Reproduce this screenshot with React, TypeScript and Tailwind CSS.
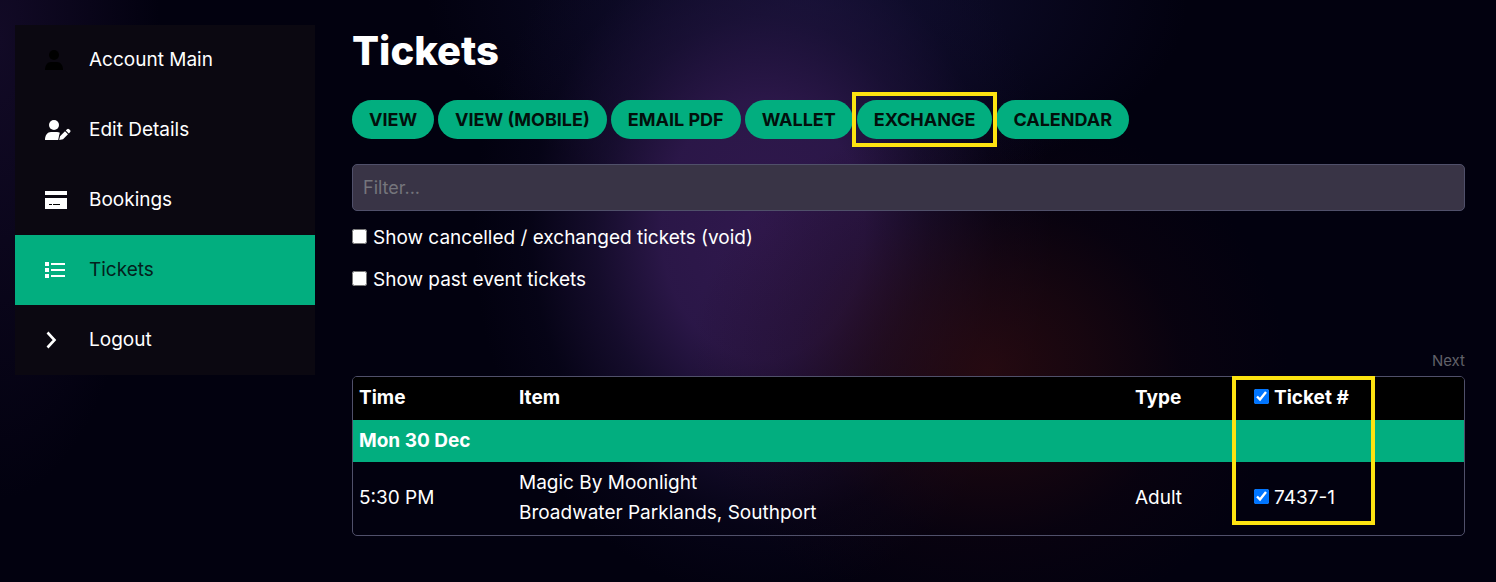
import type { ReactNode } from "react";

type NavItem = { label: string; icon: ReactNode; active?: boolean };

const navItems: NavItem[] = [
  {
    label: "Account Main",
    icon: (
      <svg viewBox="0 0 26 22" className="h-[22px] w-[26px] fill-black">
        <circle cx="9" cy="6" r="5" />
        <path d="M0 21c0-5 2.500-8 6-8h6c3.500 0 6 3 6 8z" />
      </svg>
    ),
  },
  {
    label: "Edit Details",
    icon: (
      <svg viewBox="0 0 26 22" className="h-[22px] w-[26px] fill-white">
        <circle cx="9" cy="6" r="5" />
        <path d="M0 21c0-5 2.500-8 6-8h6c1 0 2 .3 2.800.8L14 17l-.8 4z" />
        <path d="M14.200 21l.8-3.800 5-5 3 3-5 5zM20.800 11.400l1.200-1.200a1.500 1.500 0 0 1 2.100 0l.9.900a1.500 1.500 0 0 1 0 2.100l-1.200 1.200z" />
      </svg>
    ),
  },
  {
    label: "Bookings",
    icon: (
      <svg viewBox="0 0 26 22" className="h-[22px] w-[26px] fill-white">
        <path d="M0 2h22v4H0zM0 9h22v11H0z" />
        <path d="M4 15.500h3M8 15.500h7" className="stroke-black" />
      </svg>
    ),
  },
  {
    label: "Tickets",
    active: true,
    icon: (
      <svg viewBox="0 0 26 22" className="h-[22px] w-[26px] fill-white">
        <path d="M0 3h4v4H0zM0 9h4v4H0zM0 15h4v4H0zM6 4h14v2H6zM6 10h14v2H6zM6 16h14v2H6z" />
      </svg>
    ),
  },
  {
    label: "Logout",
    icon: (
      <svg viewBox="0 0 26 22" className="h-[22px] w-[26px]">
        <path d="M2.500 3.500L9.500 11l-7 7.500" fill="none" stroke="white" strokeWidth="2.600" />
      </svg>
    ),
  },
];

const actions = ["View", "View (Mobile)", "Email PDF", "Wallet", "Exchange", "Calendar"];

function Sidebar() {
  return (
    <nav className="w-[300px] shrink-0 self-start bg-[#0b0811]">
      {navItems.map((item) => (
        <a
          key={item.label}
          href="#"
          className={`flex h-[70px] items-center gap-[18px] pl-[30px] ${item.active ? "bg-[#02ae7f] text-[#04211c]" : "text-white"}`}
        >
          {item.icon}
          {item.label}
        </a>
      ))}
    </nav>
  );
}

function ActionBar() {
  return (
    <div className="mt-6 flex flex-wrap gap-1">
      {actions.map((action) => (
        <div key={action} className="relative">
          <button
            type="button"
            className="h-[39px] rounded-full bg-[#02ae7f] px-[17px] text-[18px] font-bold text-[#02100c] uppercase"
          >
            {action}
          </button>
          {action === "Exchange" && (
            <div className="pointer-events-none absolute -inset-x-[5px] -inset-y-2 z-10 border-4 border-[#fde311]" />
          )}
        </div>
      ))}
    </div>
  );
}

function TicketsTable() {
  return (
    <div className="relative">
      <div className="overflow-hidden rounded-[5px] border border-[#50506a]">
        <table className="w-full table-fixed text-left">
          <colgroup>
            <col className="w-[160px]" />
            <col />
            <col className="w-[119px]" />
            <col className="w-[216px]" />
          </colgroup>
          <thead>
            <tr className="bg-black">
              <th className="px-1.5 pt-1.5 pb-[7px] font-bold">Time</th>
              <th className="px-1.5 pt-1.5 pb-[7px] font-bold">Item</th>
              <th className="px-1.5 pt-1.5 pb-[7px] font-bold">Type</th>
              <th className="px-1.5 pt-1.5 pb-[7px] font-bold">
                <label className="flex items-center gap-[5px]">
                  <input type="checkbox" defaultChecked className="mb-1 size-[15px]" />
                  Ticket #
                </label>
              </th>
            </tr>
          </thead>
          <tbody>
            <tr className="bg-[#02ae7f]">
              <th colSpan={4} className="px-1.5 py-1.5 font-bold">Mon 30 Dec</th>
            </tr>
            <tr>
              <td className="px-1.5 pt-1.5 pb-[7px]">5:30 PM</td>
              <td className="px-1.5 pt-1.5 pb-[7px]">
                Magic By Moonlight
                <br />
                Broadwater Parklands, Southport
              </td>
              <td className="px-1.5 pt-1.5 pb-[7px]">Adult</td>
              <td className="px-1.5 pt-1.5 pb-[7px]">
                <label className="flex items-center gap-[5px]">
                  <input type="checkbox" defaultChecked className="mb-1 size-[15px]" />
                  7437-1
                </label>
              </td>
            </tr>
          </tbody>
        </table>
      </div>
      <div className="pointer-events-none absolute top-0 right-[90px] bottom-[11px] w-[143px] border-4 border-[#fde311]" />
    </div>
  );
}

export default function App() {
  return (
    <div className="min-h-screen bg-[#02010f] bg-[radial-gradient(ellipse_300px_260px_at_66%_370px,#300c10c0_0%,#260a1090_35%,#1a061040_65%,#02010f00_100%),radial-gradient(ellipse_290px_370px_at_51%_230px,#30184d_0%,#2d184bf0_35%,#20133ca0_58%,#120c2c40_80%,#02010f00_100%),radial-gradient(ellipse_380px_200px_at_54%_0px,#121034_0%,#02010f00_100%),radial-gradient(ellipse_160px_460px_at_0px_40px,#120a26_0%,#02010f00_100%)] font-['Inter',sans-serif] text-[19px] leading-[30px] text-white">
      <div className="flex gap-[37px] pt-[25px] pr-[31px] pb-[46px] pl-[15px]">
        <Sidebar />
        <main className="min-w-0 flex-1">
          <h1 className="text-[40px] leading-[51px] font-extrabold">Tickets</h1>
          <ActionBar />
          <input
            type="text"
            placeholder="Filter..."
            aria-label="Filter"
            className="mt-[25px] block h-[47px] w-full rounded-[5px] border border-[#50506a] bg-[#393446] px-2.5 text-[18px] placeholder:text-[#75757c]"
          />
          <div className="mt-3 flex flex-col items-start gap-3">
            <label className="flex items-center gap-1.5">
              <input type="checkbox" className="mb-1 size-[15px]" />
              Show cancelled / exchanged tickets (void)
            </label>
            <label className="flex items-center gap-1.5">
              <input type="checkbox" className="mb-1 size-[15px]" />
              Show past event tickets
            </label>
          </div>
          <div className="mt-[51px] text-right text-[15px] text-[#606068]">
            Next
          </div>
          <TicketsTable />
        </main>
      </div>
    </div>
  );
}
